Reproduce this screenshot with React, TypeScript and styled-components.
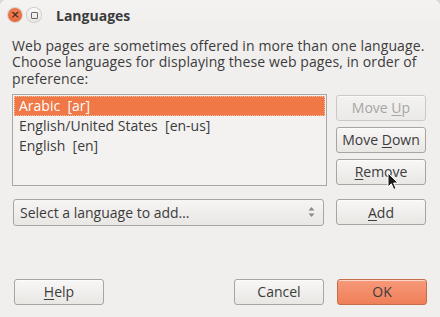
import styled, { createGlobalStyle } from "styled-components";

const Global = createGlobalStyle`
  html, body {
    margin: 0;
    padding: 0;
    background: #d9d7d3;
  }
  body {
    font-family: "Open Sans", "DejaVu Sans", sans-serif;
    font-size: 14px;
    color: #3c3c3c;
  }
`;

const languages = [
  { name: "Arabic", code: "ar" },
  { name: "English/United States", code: "en-us" },
  { name: "English", code: "en" },
];

export default function App() {
  return (
    <>
      <Global />
      <Window>
        <TitleBar>
          <CloseBtn>×</CloseBtn>
          <MaxBtn>
            <MaxBox />
          </MaxBtn>
          <Title>Languages</Title>
        </TitleBar>
        <Body>
          <Description>
            <Line>Web pages are sometimes offered in more than one language.</Line>
            <Line>Choose languages for displaying these web pages, in order of</Line>
            <Line>preference:</Line>
          </Description>
          <ListRow>
            <ListBox>
              {languages.map((l, i) => (
                <ListItem key={l.code} $selected={i === 0}>
                  {l.name}&nbsp; [{l.code}]
                </ListItem>
              ))}
            </ListBox>
            <SideButtons>
              <Button disabled>
                Move <u>U</u>p
              </Button>
              <Button>
                Move <u>D</u>own
              </Button>
              <Button>
                <u>R</u>emove
              </Button>
            </SideButtons>
          </ListRow>
          <AddRow>
            <Combo>
              <span>Select a language to add…</span>
              <ComboArrows>
                <svg width="7" height="12" viewBox="0 0 7 12">
                  <path d="M3.5 1 L6.5 4.5 H0.5 Z" fill="#8a8a8a" />
                  <path d="M3.5 11 L6.5 7.5 H0.5 Z" fill="#8a8a8a" />
                </svg>
              </ComboArrows>
            </Combo>
            <Button>
              <u>A</u>dd
            </Button>
          </AddRow>
          <Footer>
            <Button>
              <u>H</u>elp
            </Button>
            <FooterRight>
              <Button>Cancel</Button>
              <Button $primary>OK</Button>
            </FooterRight>
          </Footer>
        </Body>
        <Cursor width="12" height="19" viewBox="0 0 12 19">
          <path
            d="M1 1 L1 15 L4.3 11.8 L6.8 17.5 L9 16.5 L6.6 11 L11 11 Z"
            fill="#1a1a1a"
            stroke="#ffffff"
            strokeWidth="1"
            strokeLinejoin="round"
          />
        </Cursor>
      </Window>
    </>
  );
}

const Window = styled.div`
  position: relative;
  width: 440px;
  height: 317px;
  box-sizing: border-box;
  background: #f0efee;
  border-radius: 6px 6px 0 0;
  overflow: hidden;
`;

const TitleBar = styled.div`
  height: 30px;
  display: flex;
  align-items: center;
  padding-left: 8px;
  background: linear-gradient(#f4f3f2, #efeeed);
`;

const CloseBtn = styled.div`
  width: 14px;
  height: 14px;
  border-radius: 50%;
  background: radial-gradient(circle at 50% 40%, #f58a5d, #e0582c);
  box-shadow: 0 0 0 1px #d7d2cb;
  color: #4a2a1c;
  font-size: 11px;
  line-height: 14px;
  text-align: center;
  font-family: "DejaVu Sans", sans-serif;
  font-weight: bold;
`;

const MaxBtn = styled.div`
  width: 14px;
  height: 14px;
  margin-left: 5px;
  border-radius: 50%;
  background: linear-gradient(#fbfbfa, #e6e4e1);
  box-shadow: 0 0 0 1px #cfcbc5;
  display: flex;
  align-items: center;
  justify-content: center;
`;

const MaxBox = styled.div`
  width: 5px;
  height: 5px;
  border: 1px solid #6a6a6a;
  border-radius: 1px;
`;

const Title = styled.div`
  margin-left: 15px;
  font-weight: bold;
  font-size: 14px;
  color: #3c3c3c;
`;

const Body = styled.div`
  padding: 8px 13px 0 12px;
  display: flex;
  flex-direction: column;
`;

const Description = styled.div`
  display: flex;
  flex-direction: column;
  color: #3c3c3c;
`;

const Line = styled.div`
  height: 16.3px;
  line-height: 16.3px;
  letter-spacing: 0.1px;
  white-space: nowrap;
`;

const ListRow = styled.div`
  margin-top: 7px;
  display: flex;
  gap: 9px;
`;

const ListBox = styled.div`
  width: 315px;
  height: 92px;
  box-sizing: border-box;
  border: 1px solid #a9a7a3;
  background: #f3f2f1;
  padding: 1px;
`;

const ListItem = styled.div<{ $selected?: boolean }>`
  height: 20px;
  line-height: 18px;
  padding-left: 4px;
  box-sizing: border-box;
  color: ${(p) => (p.$selected ? "#ffffff" : "#3c3c3c")};
  background: ${(p) => (p.$selected ? "#f07746" : "transparent")};
  border: 1px dotted ${(p) => (p.$selected ? "#f9c2a8" : "transparent")};
`;

const SideButtons = styled.div`
  display: flex;
  flex-direction: column;
  gap: 6px;
  padding-top: 1px;
`;

const Button = styled.button<{ $primary?: boolean }>`
  width: 90px;
  height: 26px;
  padding: 0;
  font-family: inherit;
  font-size: 14px;
  border-radius: 3px;
  border: 1px solid ${(p) => (p.$primary ? "#c56c4a" : "#a8a5a0")};
  color: #3c3c3c;
  background: ${(p) =>
    p.$primary
      ? "linear-gradient(#f7997a, #ef7f58)"
      : "linear-gradient(#f8f7f6, #e9e7e4)"};
  box-shadow: inset 0 1px 0 rgba(255, 255, 255, 0.6);

  &:disabled {
    color: #a7a6a4;
    border-color: #cbc9c5;
    background: linear-gradient(#f3f2f1, #ebeae8);
  }

  u {
    text-decoration-thickness: 1px;
    text-underline-offset: 2px;
  }
`;

const AddRow = styled.div`
  margin-top: 13px;
  display: flex;
  align-items: center;
  gap: 12px;
  padding-left: 1px;
`;

const Combo = styled.div`
  width: 311px;
  height: 27px;
  box-sizing: border-box;
  border: 1px solid #a8a5a0;
  border-radius: 3px;
  background: linear-gradient(#f6f5f4, #e9e7e4);
  display: flex;
  align-items: center;
  justify-content: space-between;
  padding: 0 8px 0 6px;
  color: #3c3c3c;
`;

const ComboArrows = styled.div`
  display: flex;
  align-items: center;
`;

const Footer = styled.div`
  margin-top: 53px;
  display: flex;
  justify-content: space-between;
  padding-left: 2px;
`;

const FooterRight = styled.div`
  display: flex;
  gap: 13px;
`;

const Cursor = styled.svg`
  position: absolute;
  left: 387px;
  top: 172px;
`;
